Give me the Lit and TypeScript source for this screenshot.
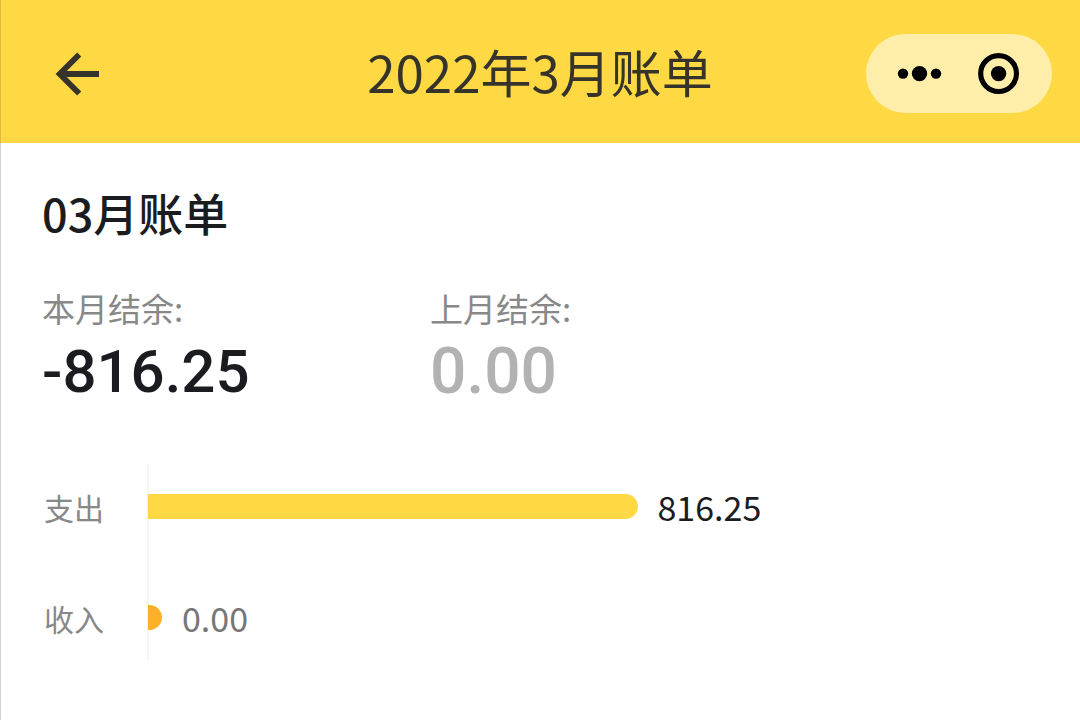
import { LitElement, html, css } from "lit";
import { customElement, state } from "lit/decorators.js";
import { styleMap } from "lit/directives/style-map.js";

interface Flow {
  name: string;
  kind: "expense" | "income";
  amount: number;
}

@customElement("app-root")
export class AppRoot extends LitElement {
  @state() private flows: Flow[] = [
    { name: "支出", kind: "expense", amount: 816.25 },
    { name: "收入", kind: "income", amount: 0 },
  ];

  static styles = css`
    :host {
      display: block;
      box-sizing: border-box;
      min-height: 100vh;
      background: #fff;
      color: #1b1c20;
      font-family: "Noto Sans CJK SC", sans-serif;
      box-shadow: inset 1px 0 #d2d2d2;
    }
    .bar {
      display: grid;
      grid-template-columns: 1fr auto 1fr;
      align-items: center;
      padding: 34px 28px 30px 48px;
      background: #ffd944;
      box-shadow: inset 1px 0 #dcbc40;
    }
    .title {
      margin: 0;
      padding: 0 20px 4px 0;
      font-size: 51px;
      line-height: 75px;
      font-weight: 400;
      color: #35332a;
    }
    button {
      display: flex;
      border: 0;
      padding: 0;
      background: none;
      color: inherit;
      cursor: pointer;
    }
    .back {
      justify-self: start;
      color: #35332a;
    }
    .capsule {
      justify-self: end;
      display: flex;
      border-radius: 40px;
      background: #ffeea9;
      color: #000;
    }
    .capsule button {
      width: 93px;
      height: 79px;
      align-items: center;
      justify-content: center;
    }
    .capsule .more {
      padding-left: 14px;
    }
    .capsule .close {
      padding-right: 14px;
    }
    main {
      padding: 38px 42px;
    }
    h2 {
      margin: 0;
      font-size: 45px;
      line-height: 64px;
      font-weight: 500;
    }
    .balances {
      display: grid;
      grid-template-columns: 388px 1fr;
      margin: 43px 0 0;
    }
    dt {
      font-size: 33px;
      line-height: 40px;
      font-weight: 400;
      color: #888;
    }
    dd {
      margin: 0;
      font-family: Roboto, "Noto Sans CJK SC", sans-serif;
      font-size: 60px;
      line-height: 88px;
      font-weight: 500;
    }
    .previous {
      font-size: 64px;
      color: #b2b2b2;
    }
    .chart {
      display: grid;
      grid-template-columns: 105px 1fr;
      margin-top: 48px;
    }
    .names,
    .bars {
      display: grid;
      grid-auto-rows: 85px;
      row-gap: 26px;
      align-items: center;
    }
    .names {
      padding-left: 2px;
      font-size: 30px;
      line-height: 40px;
      font-weight: 400;
      color: #888;
    }
    .bars {
      border-left: 2px solid #f4f4f4;
    }
    .row {
      display: flex;
      align-items: center;
      gap: 20px;
      margin-left: -1px;
      font-size: 34px;
      line-height: 41px;
      font-weight: 400;
    }
    .fill {
      height: 25px;
      min-width: 14px;
      border-radius: 0 13px 13px 0;
      background: #ffd944;
    }
    .income .fill {
      background: #ffb029;
    }
    .income {
      color: #777;
    }
  `;

  render() {
    const max = Math.max(...this.flows.map((f) => f.amount), 1);
    return html`
      <header class="bar">
        <button class="back" type="button" aria-label="返回">
          <svg width="60" height="60" viewBox="0 0 60 60" fill="none" stroke="currentColor" stroke-width="5.800">
            <path d="M51 30H14M31.200 10.500L11.700 30L31.200 49.500" />
          </svg>
        </button>
        <h1 class="title">2022年3月账单</h1>
        <div class="capsule">
          <button class="more" type="button" aria-label="更多">
            <svg width="46" height="20" viewBox="0 0 46 20" fill="currentColor">
              <circle cx="6" cy="9.600" r="5.200" />
              <circle cx="22.500" cy="9.600" r="7.700" />
              <circle cx="39" cy="9.600" r="5.200" />
            </svg>
          </button>
          <button class="close" type="button" aria-label="关闭">
            <svg width="42" height="42" viewBox="0 0 42 42">
              <circle cx="20.600" cy="20.600" r="17.900" fill="none" stroke="currentColor" stroke-width="5.200" />
              <circle cx="20.600" cy="20.600" r="7.700" fill="currentColor" />
            </svg>
          </button>
        </div>
      </header>
      <main>
        <h2>03月账单</h2>
        <dl class="balances">
          <div>
            <dt>本月结余:</dt>
            <dd>-816.25</dd>
          </div>
          <div>
            <dt>上月结余:</dt>
            <dd class="previous">0.00</dd>
          </div>
        </dl>
        <section class="chart" aria-label="收支对比">
          <div class="names">${this.flows.map((f) => html`<span>${f.name}</span>`)}</div>
          <div class="bars">
            ${this.flows.map(
              (f) => html`
                <div class="row ${f.kind}">
                  <div class="fill" style=${styleMap({ width: `${(f.amount / max) * 55}%` })}></div>
                  <span>${f.amount.toFixed(2)}</span>
                </div>
              `,
            )}
          </div>
        </section>
      </main>
    `;
  }
}
